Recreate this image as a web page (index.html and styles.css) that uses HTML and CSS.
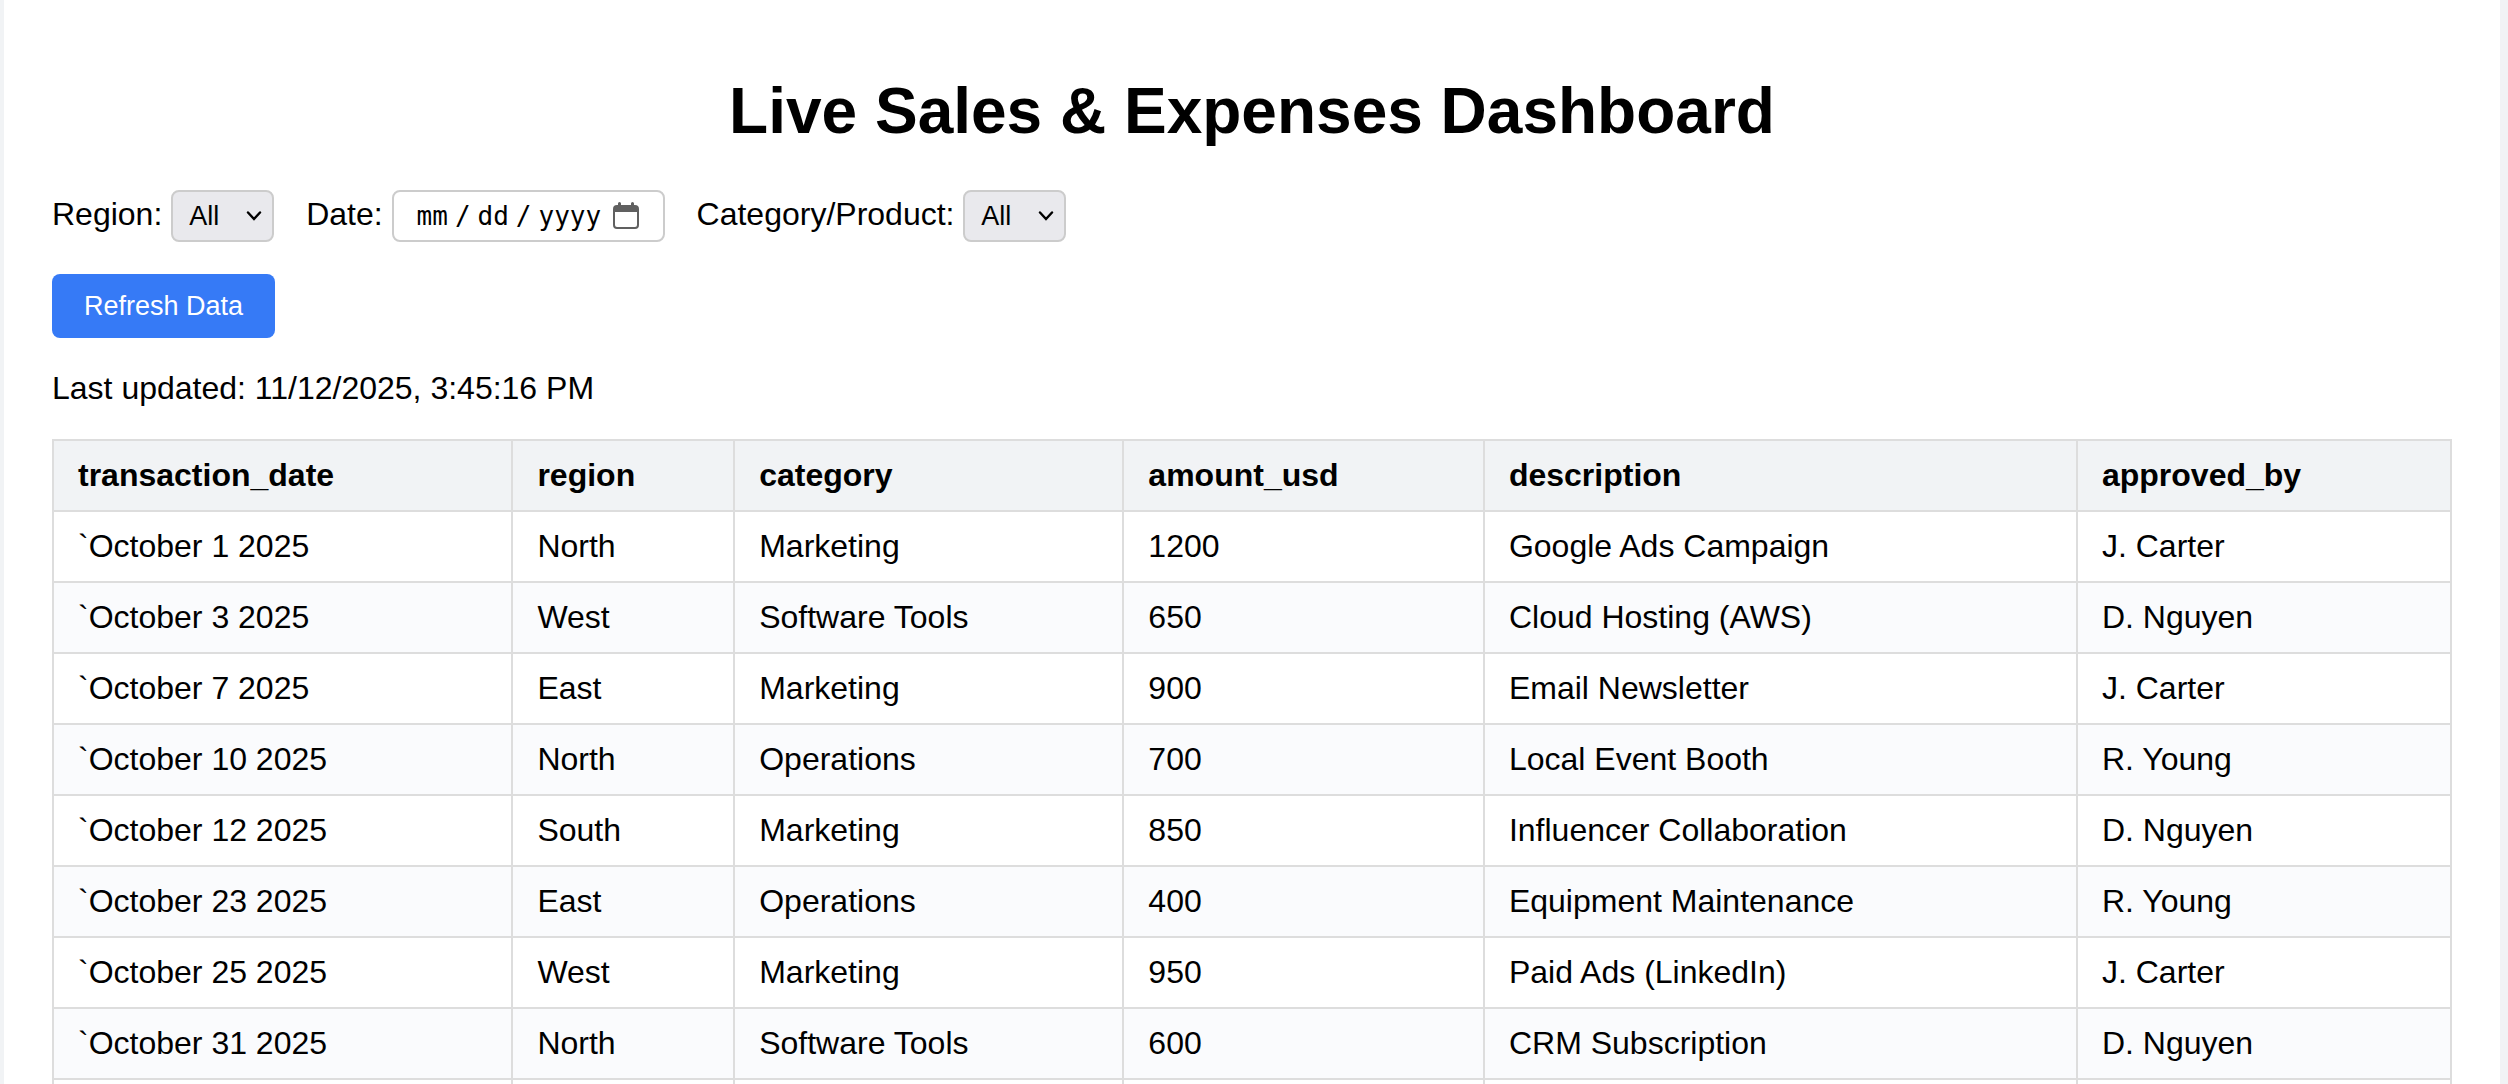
FILE: index.html
```
<!DOCTYPE html>
<html lang="en">
<head>
    <meta charset="UTF-8">
    <title>Live Sales &amp; Expenses Dashboard</title>
    <link rel="stylesheet" href="styles.css">
</head>
<body>

<div class="container">
    <h1>Live Sales &amp; Expenses Dashboard</h1>

    <div class="filters">
        <div>
            <label for="region">Region:</label>
            <select id="region" name="region">
                <option value="">All</option>
            </select>
        </div>
        <div>
            <label for="date">Date:</label>
            <input type="date" id="date" name="date">
        </div>
        <div>
            <label for="category">Category/Product:</label>
            <select id="category" name="category">
                <option value="">All</option>
            </select>
        </div>
    </div>

    <button type="button" id="refresh">Refresh Data</button>

    <p id="lastUpdated">Last updated: 11/12/2025, 3:45:16 PM</p>

    <table>
        <thead>
            <tr>
                <th>transaction_date</th>
                <th>region</th>
                <th>category</th>
                <th>amount_usd</th>
                <th>description</th>
                <th>approved_by</th>
            </tr>
        </thead>
        <tbody>
            <tr><td>`October 1 2025</td><td>North</td><td>Marketing</td><td>1200</td><td>Google Ads Campaign</td><td>J. Carter</td></tr>
            <tr><td>`October 3 2025</td><td>West</td><td>Software Tools</td><td>650</td><td>Cloud Hosting (AWS)</td><td>D. Nguyen</td></tr>
            <tr><td>`October 7 2025</td><td>East</td><td>Marketing</td><td>900</td><td>Email Newsletter</td><td>J. Carter</td></tr>
            <tr><td>`October 10 2025</td><td>North</td><td>Operations</td><td>700</td><td>Local Event Booth</td><td>R. Young</td></tr>
            <tr><td>`October 12 2025</td><td>South</td><td>Marketing</td><td>850</td><td>Influencer Collaboration</td><td>D. Nguyen</td></tr>
            <tr><td>`October 23 2025</td><td>East</td><td>Operations</td><td>400</td><td>Equipment Maintenance</td><td>R. Young</td></tr>
            <tr><td>`October 25 2025</td><td>West</td><td>Marketing</td><td>950</td><td>Paid Ads (LinkedIn)</td><td>J. Carter</td></tr>
            <tr><td>`October 31 2025</td><td>North</td><td>Software Tools</td><td>600</td><td>CRM Subscription</td><td>D. Nguyen</td></tr>
            <tr><td></td><td></td><td></td><td></td><td></td><td></td></tr>
        </tbody>
    </table>
</div>

</body>
</html>
```
FILE: styles.css
```
body {
    margin: 0;
    padding: 0 8px 0 4px;
    height: 100vh;
    box-sizing: border-box;
    overflow: hidden;
    font-family: Arial, "Liberation Sans", sans-serif;
    font-size: 32px;
    line-height: 37px;
    color: #000;
    background-color: #f1f3f5;
}
.container {
    padding: 32px 48px;
    background-color: #fff;
}
h1 {
    margin: 42px 0;
    font-size: 64px;
    line-height: 74px;
    text-align: center;
}
.filters {
    display: flex;
    flex-wrap: wrap;
    gap: 32px;
    margin-bottom: 32px;
}
select, input {
    height: 52px;
    box-sizing: border-box;
    border: 2px solid #ccc;
    border-radius: 8px;
    color: #000;
}
select {
    appearance: none;
    width: 103px;
    padding: 0 16px;
    font-family: inherit;
    font-size: 27px;
    background: #e9e9ed url("data:image/svg+xml,%3Csvg xmlns='http://www.w3.org/2000/svg' width='16' height='10' fill='none' stroke='black' stroke-width='2.4' stroke-linecap='round'%3E%3Cpath d='M2 1.5l6 6.5 6-6.5'/%3E%3C/svg%3E") no-repeat right 10px center;
}
input {
    width: 273px;
    padding: 0 24px 0 22px;
    font-family: "DejaVu Sans Mono", monospace;
    font-size: 26px;
    background-color: #fff;
}
input::-webkit-datetime-edit-text {
    padding: 0 6px;
}
input::-webkit-calendar-picker-indicator {
    width: 26px;
    height: 28px;
    margin: 0;
    padding: 0;
    background: url("data:image/svg+xml,%3Csvg xmlns='http://www.w3.org/2000/svg' width='26' height='28'%3E%3Cpath fill='%23606060' d='M5 3V1.5a1.5 1.5 0 0 1 3 0V3h10V1.5a1.5 1.5 0 0 1 3 0V3h1a4 4 0 0 1 4 4v16a4 4 0 0 1-4 4H4a4 4 0 0 1-4-4V7a4 4 0 0 1 4-4zM2 10v13a2 2 0 0 0 2 2h18a2 2 0 0 0 2-2V10z'/%3E%3C/svg%3E") no-repeat center;
}
button {
    display: block;
    padding: 16px 32px;
    border: none;
    border-radius: 8px;
    font-family: inherit;
    font-size: 27px;
    line-height: 32px;
    color: #fff;
    background-color: #367af6;
    cursor: pointer;
}
p {
    margin: 32px 0;
}
table {
    width: 100%;
    border-collapse: collapse;
}
th, td {
    padding: 16px 24px;
    border: 2px solid #ddd;
    text-align: left;
}
th {
    background-color: #f1f3f5;
}
tbody tr:nth-child(even) {
    background-color: #fafbfd;
}
```
